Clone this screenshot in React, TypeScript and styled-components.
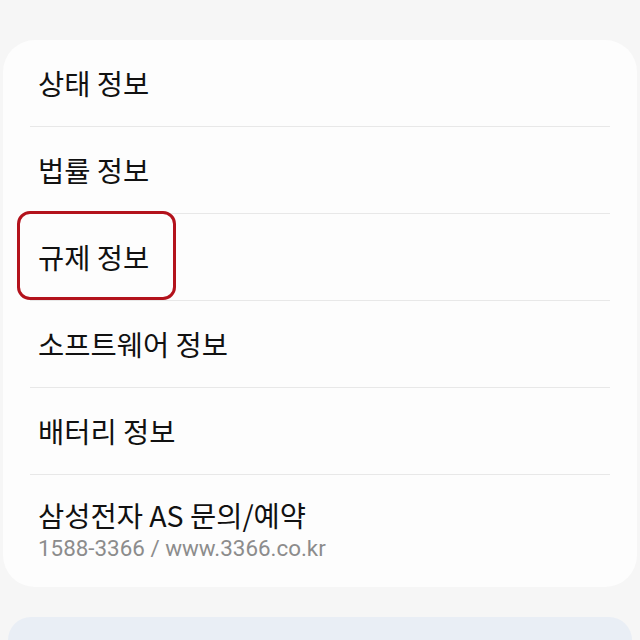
import styled, { createGlobalStyle } from "styled-components"

const Global = createGlobalStyle`
  html, body {
    margin: 0;
    padding: 0;
    background: #f6f6f6;
    font-family: "Noto Sans CJK KR", "Noto Sans", sans-serif;
  }
`

const Page = styled.div`
  width: 640px;
  height: 640px;
  overflow: hidden;
  padding: 40px 3px 0 3px;
  box-sizing: border-box;
  display: flex;
  flex-direction: column;
  gap: 30px;
`

const Card = styled.section`
  background: #fdfdfd;
  border-radius: 32px;
  padding: 0 27px;
  display: flex;
  flex-direction: column;
`

const Row = styled.div<{ $last?: boolean }>`
  position: relative;
  height: ${p => (p.$last ? "112px" : "87px")};
  border-bottom: ${p => (p.$last ? "none" : "1.5px solid #e8e8e8")};
  box-sizing: border-box;
  display: flex;
  flex-direction: column;
  justify-content: center;
  padding-left: 8px;
  padding-bottom: ${p => (p.$last ? "2px" : "0")};
`

const Title = styled.div`
  font-size: 28.5px;
  color: #111;
  line-height: 36px;
`

const Sub = styled.div`
  font-size: 22.4px;
  color: #8c8c8c;
  line-height: 31px;
  font-family: "Roboto", "Noto Sans CJK KR", sans-serif;
`

const Highlight = styled.div`
  position: absolute;
  left: -13px;
  top: -3px;
  width: 159px;
  height: 89px;
  border: 3px solid #b3121c;
  border-radius: 13px;
  box-sizing: border-box;
`

const BlueCard = styled.div`
  height: 60px;
  margin: 0 5px;
  background: #e9eef5;
  border-radius: 30px 30px 0 0;
`

const items = ["상태 정보", "법률 정보", "규제 정보", "소프트웨어 정보", "배터리 정보"]

export default function App() {
  return (
    <>
      <Global />
      <Page>
        <Card>
          {items.map((t, i) => (
            <Row key={t}>
              <Title>{t}</Title>
              {i === 2 && <Highlight />}
            </Row>
          ))}
          <Row $last>
            <Title>삼성전자 AS 문의/예약</Title>
            <Sub>1588-3366 / www.3366.co.kr</Sub>
          </Row>
        </Card>
        <BlueCard />
      </Page>
    </>
  )
}
